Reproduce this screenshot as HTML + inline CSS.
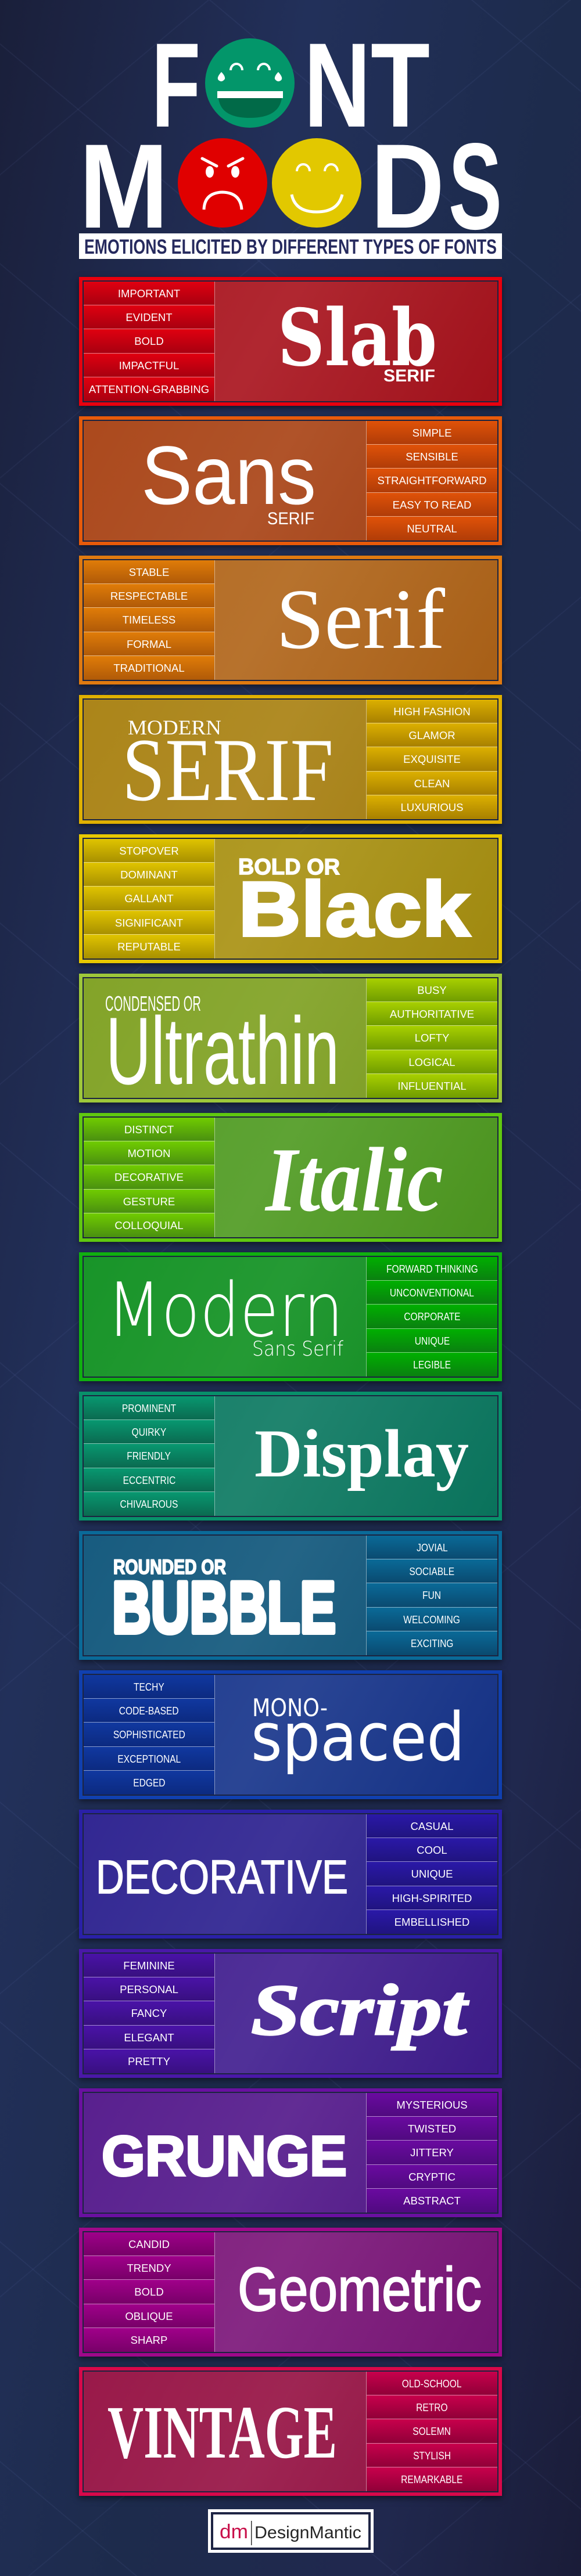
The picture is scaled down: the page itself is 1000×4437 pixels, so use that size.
<!DOCTYPE html>
<html><head><meta charset="utf-8">
<style>
*{margin:0;padding:0;box-sizing:border-box}
body{width:1000px;height:4437px;overflow:hidden;position:relative;
background:
repeating-linear-gradient(40deg,rgba(255,255,255,0) 0 150px,rgba(150,170,255,.06) 150px 152px,rgba(255,255,255,0) 152px 290px),
repeating-linear-gradient(-40deg,rgba(255,255,255,0) 0 210px,rgba(150,170,255,.05) 210px 212px,rgba(255,255,255,0) 212px 400px),
linear-gradient(100deg,#1a1f3a 0%,#22305a 30%,#1d2b4c 55%,#20284e 80%,#1a1c38 100%);
font-family:"Liberation Sans",sans-serif}
.card{position:absolute;left:136px;width:728px;height:222px;background:var(--b);box-shadow:0 4px 10px rgba(0,0,0,.5)}
.in{position:absolute;left:6px;top:6px;right:6px;bottom:6px;border:2px solid #1c2440;
background:linear-gradient(120deg,rgba(255,255,255,.04),rgba(255,255,255,.09) 45%,rgba(0,0,0,.05)),var(--f)}
.list{position:absolute;top:8px;width:226px;height:206px}
.list.l{left:8px;border-right:1px solid rgba(255,255,255,.45)}
.list.r{left:494px;border-left:1px solid rgba(255,255,255,.45)}
.list div{height:41.2px;line-height:41px;text-align:center;color:#fff;font-size:18.5px;
background:linear-gradient(var(--lt),var(--lb));border-bottom:1px solid rgba(255,255,255,.5)}
.list div:last-child{border-bottom:none}
.n div span{display:inline-block;transform:scaleX(.84)}
.card svg{position:absolute;left:0;top:0}
svg text{fill:#fff}
</style></head><body>

<svg width="1000" height="460" style="position:absolute;left:0;top:0">
<g font-family="Liberation Sans" font-weight="bold" font-size="207" fill="#fff">
<text x="261" y="218" textLength="84" lengthAdjust="spacingAndGlyphs">F</text>
<text x="523" y="218" textLength="115" lengthAdjust="spacingAndGlyphs">N</text>
<text x="638" y="218" textLength="102" lengthAdjust="spacingAndGlyphs">T</text>
<text x="136" y="392" textLength="154" lengthAdjust="spacingAndGlyphs">M</text>
<text x="638" y="392" textLength="127" lengthAdjust="spacingAndGlyphs">D</text>
<text x="772" y="394" textLength="92" lengthAdjust="spacingAndGlyphs" font-size="212">S</text>
</g>
<!-- green face -->
<circle cx="430" cy="143" r="77" fill="#03966a"/>
<path d="M397,121 A10,11 0 0 1 417,121 M444,121 A10,11 0 0 1 464,121" stroke="#fff" stroke-width="4" fill="none"/>
<path d="M381,124 Q372,134 376,138 Q382,143 387,136 Q388,131 381,124Z M479,124 Q488,134 484,138 Q478,143 473,136 Q472,131 479,124Z" fill="#fff"/>
<rect x="374" y="157" width="113" height="12" fill="#fff"/>
<path d="M376,169 H485 Q480,203 430,203 Q380,203 376,169Z" fill="#016a48"/>
<!-- red face -->
<circle cx="383" cy="315" r="77" fill="#e00000"/>
<path d="M348,273 L373,286 M418,273 L393,286" stroke="#fff" stroke-width="5" stroke-linecap="round"/>
<ellipse cx="361" cy="296" rx="7" ry="10" fill="#fff"/>
<ellipse cx="405" cy="296" rx="7" ry="10" fill="#fff"/>
<path d="M351,361 Q352,332 383,331 Q414,332 416,361" stroke="#fff" stroke-width="5" fill="none"/>
<!-- yellow face -->
<circle cx="545" cy="315" r="77" fill="#e2c800"/>
<path d="M511,295 A11,12 0 0 1 533,295 M559,295 A11,12 0 0 1 581,295" stroke="#fff" stroke-width="4" fill="none"/>
<path d="M502,335 Q508,365 545,365 Q582,365 589,335" stroke="#fff" stroke-width="5" fill="none"/>
<rect x="136" y="402" width="728" height="44" fill="#fff"/>
<text x="145" y="437" font-size="35" font-weight="bold" style="fill:#262a5e" textLength="710" lengthAdjust="spacingAndGlyphs">EMOTIONS ELICITED BY DIFFERENT TYPES OF FONTS</text>
</svg>

<!-- 1 Slab -->
<div class="card" style="top:477px;--b:#e8000e;--f:#a8121c;--lt:#e00010;--lb:#a80010">
<div class="in"></div>
<div class="list l"><div>IMPORTANT</div><div>EVIDENT</div><div>BOLD</div><div>IMPACTFUL</div><div>ATTENTION-GRABBING</div></div>
<svg width="728" height="222"><text x="342" y="152" font-family="DejaVu Serif" font-weight="bold" font-size="135" textLength="274" lengthAdjust="spacingAndGlyphs">Slab</text>
<text x="524" y="180" font-family="Liberation Sans" font-weight="bold" font-size="30" textLength="89" lengthAdjust="spacingAndGlyphs">SERIF</text></svg></div>

<!-- 2 Sans -->
<div class="card" style="top:717px;--b:#e85a0a;--f:#a84214;--lt:#e05208;--lb:#b03c08">
<div class="in"></div>
<div class="list r"><div>SIMPLE</div><div>SENSIBLE</div><div>STRAIGHTFORWARD</div><div>EASY TO READ</div><div>NEUTRAL</div></div>
<svg width="728" height="222"><text x="107" y="151" font-family="Liberation Sans" font-size="143" textLength="301" lengthAdjust="spacingAndGlyphs">Sans</text>
<text x="324" y="186" font-family="Liberation Sans" font-size="30" textLength="81" lengthAdjust="spacingAndGlyphs">SERIF</text></svg></div>

<!-- 3 Serif -->
<div class="card" style="top:957px;--b:#e07a10;--f:#b06418;--lt:#e07c08;--lb:#b05a08">
<div class="in"></div>
<div class="list l"><div>STABLE</div><div>RESPECTABLE</div><div>TIMELESS</div><div>FORMAL</div><div>TRADITIONAL</div></div>
<svg width="728" height="222"><text x="339" y="159" font-family="Liberation Serif" font-size="148" textLength="291" lengthAdjust="spacingAndGlyphs">Serif</text></svg></div>

<!-- 4 Modern Serif -->
<div class="card" style="top:1197px;--b:#e0b000;--f:#a88010;--lt:#dcb000;--lb:#a88000">
<div class="in"></div>
<div class="list r"><div>HIGH FASHION</div><div>GLAMOR</div><div>EXQUISITE</div><div>CLEAN</div><div>LUXURIOUS</div></div>
<svg width="728" height="222"><text x="84" y="68" font-family="Liberation Serif" font-size="36" textLength="161" lengthAdjust="spacingAndGlyphs">MODERN</text>
<text x="74" y="181" font-family="Liberation Serif" font-size="155" textLength="364" lengthAdjust="spacingAndGlyphs">SERIF</text></svg></div>

<!-- 5 Bold -->
<div class="card" style="top:1437px;--b:#e8c800;--f:#a89010;--lt:#e0c400;--lb:#a89000">
<div class="in"></div>
<div class="list l"><div>STOPOVER</div><div>DOMINANT</div><div>GALLANT</div><div>SIGNIFICANT</div><div>REPUTABLE</div></div>
<svg width="728" height="222"><text x="274" y="69" font-family="Liberation Sans" font-weight="bold" font-size="39" stroke="#fff" stroke-width="1.5" textLength="175" lengthAdjust="spacingAndGlyphs">BOLD OR</text>
<text x="274" y="175" font-family="Liberation Sans" font-weight="bold" font-size="134" stroke="#fff" stroke-width="4" textLength="399" lengthAdjust="spacingAndGlyphs">Black</text></svg></div>

<!-- 6 Ultrathin -->
<div class="card" style="top:1677px;--b:#9ec83a;--f:#7ea020;--lt:#a8d000;--lb:#709c00">
<div class="in"></div>
<div class="list r"><div>BUSY</div><div>AUTHORITATIVE</div><div>LOFTY</div><div>LOGICAL</div><div>INFLUENTIAL</div></div>
<svg width="728" height="222"><text x="45" y="64" font-family="Liberation Sans" font-size="36" textLength="165" lengthAdjust="spacingAndGlyphs">CONDENSED OR</text>
<text x="46" y="190" font-family="Liberation Sans" font-size="165" textLength="402" lengthAdjust="spacingAndGlyphs">Ultrathin</text></svg></div>

<!-- 7 Italic -->
<div class="card" style="top:1917px;--b:#60c810;--f:#4e9a20;--lt:#70cc00;--lb:#4a9010">
<div class="in"></div>
<div class="list l"><div>DISTINCT</div><div>MOTION</div><div>DECORATIVE</div><div>GESTURE</div><div>COLLOQUIAL</div></div>
<svg width="728" height="222"><text x="321" y="168" font-family="Liberation Serif" font-weight="bold" font-style="italic" font-size="158" textLength="306" lengthAdjust="spacingAndGlyphs">Italic</text></svg></div>

<!-- 8 Modern -->
<div class="card" style="top:2157px;--b:#10b010;--f:#0f9020;--lt:#00b000;--lb:#0a8010">
<div class="in"></div>
<div class="list r n"><div><span>FORWARD THINKING</span></div><div><span>UNCONVENTIONAL</span></div><div><span>CORPORATE</span></div><div><span>UNIQUE</span></div><div><span>LEGIBLE</span></div></div>
<svg width="728" height="222"><text x="48" y="144" font-family="DejaVu Sans" font-weight="200" font-size="128" textLength="407" lengthAdjust="spacingAndGlyphs">Modern</text>
<text x="298" y="178" font-family="DejaVu Sans" font-weight="200" font-size="35" textLength="157" lengthAdjust="spacingAndGlyphs">Sans Serif</text></svg></div>

<!-- 9 Display -->
<div class="card" style="top:2397px;--b:#08906a;--f:#0a7860;--lt:#089870;--lb:#0a6a50">
<div class="in"></div>
<div class="list l n"><div><span>PROMINENT</span></div><div><span>QUIRKY</span></div><div><span>FRIENDLY</span></div><div><span>ECCENTRIC</span></div><div><span>CHIVALROUS</span></div></div>
<svg width="728" height="222"><text x="302" y="146" font-family="Liberation Serif" font-weight="bold" font-size="118" textLength="369" lengthAdjust="spacingAndGlyphs">Display</text></svg></div>

<!-- 10 Bubble -->
<div class="card" style="top:2637px;--b:#0a6a98;--f:#0e557a;--lt:#0a6a98;--lb:#0a4a70">
<div class="in"></div>
<div class="list r n"><div><span>JOVIAL</span></div><div><span>SOCIABLE</span></div><div><span>FUN</span></div><div><span>WELCOMING</span></div><div><span>EXCITING</span></div></div>
<svg width="728" height="222"><text x="59" y="74" font-family="Liberation Sans" font-weight="bold" font-size="35" stroke="#fff" stroke-width="2" stroke-linejoin="round" textLength="194" lengthAdjust="spacingAndGlyphs">ROUNDED OR</text>
<text x="57" y="175" font-family="Liberation Sans" font-weight="bold" font-size="125" stroke="#fff" stroke-width="8" stroke-linejoin="round" textLength="385" lengthAdjust="spacingAndGlyphs">BUBBLE</text></svg></div>

<!-- 11 Mono -->
<div class="card" style="top:2877px;--b:#1040b0;--f:#15338a;--lt:#1038a0;--lb:#0c2a80">
<div class="in"></div>
<div class="list l n"><div><span>TECHY</span></div><div><span>CODE-BASED</span></div><div><span>SOPHISTICATED</span></div><div><span>EXCEPTIONAL</span></div><div><span>EDGED</span></div></div>
<svg width="728" height="222"><text x="298" y="79" font-family="DejaVu Sans" font-size="42" textLength="130" lengthAdjust="spacingAndGlyphs">MONO-</text>
<text x="296" y="155" font-family="DejaVu Sans" font-size="115" textLength="368" lengthAdjust="spacingAndGlyphs">spaced</text></svg></div>

<!-- 12 Decorative -->
<div class="card" style="top:3117px;--b:#2a20a8;--f:#2a1f8e;--lt:#2a18a8;--lb:#201480">
<div class="in"></div>
<div class="list r"><div>CASUAL</div><div>COOL</div><div>UNIQUE</div><div>HIGH-SPIRITED</div><div>EMBELLISHED</div></div>
<svg width="728" height="222"><text x="29" y="144" font-family="Liberation Sans" font-size="82" stroke="#fff" stroke-width="1.5" textLength="434" lengthAdjust="spacingAndGlyphs">DECORATIVE</text></svg></div>

<!-- 13 Script -->
<div class="card" style="top:3357px;--b:#4a18a8;--f:#3f1c8e;--lt:#4a12a8;--lb:#381080">
<div class="in"></div>
<div class="list l"><div>FEMININE</div><div>PERSONAL</div><div>FANCY</div><div>ELEGANT</div><div>PRETTY</div></div>
<svg width="728" height="222"><text x="296" y="147" font-family="Liberation Serif" font-weight="bold" font-style="italic" font-size="125" stroke="#fff" stroke-width="3" textLength="371" lengthAdjust="spacingAndGlyphs">Script</text></svg></div>

<!-- 14 Grunge -->
<div class="card" style="top:3597px;--b:#6a10a0;--f:#52178a;--lt:#6a0aa0;--lb:#500a80">
<div class="in"></div>
<div class="list r"><div>MYSTERIOUS</div><div>TWISTED</div><div>JITTERY</div><div>CRYPTIC</div><div>ABSTRACT</div></div>
<svg width="728" height="222"><text x="39" y="150" font-family="Liberation Sans" font-weight="bold" font-size="97" stroke="#fff" stroke-width="4" textLength="422" lengthAdjust="spacingAndGlyphs">GRUNGE</text></svg></div>

<!-- 15 Geometric -->
<div class="card" style="top:3837px;--b:#a0088a;--f:#7a1478;--lt:#a0008a;--lb:#780068">
<div class="in"></div>
<div class="list l"><div>CANDID</div><div>TRENDY</div><div>BOLD</div><div>OBLIQUE</div><div>SHARP</div></div>
<svg width="728" height="222"><text x="273" y="143" font-family="Liberation Sans" font-size="107" stroke="#fff" stroke-width="2" textLength="420" lengthAdjust="spacingAndGlyphs">Geometric</text></svg></div>

<!-- 16 Vintage -->
<div class="card" style="top:4077px;--b:#d8084a;--f:#951042;--lt:#c8004c;--lb:#900038">
<div class="in"></div>
<div class="list r n"><div><span>OLD-SCHOOL</span></div><div><span>RETRO</span></div><div><span>SOLEMN</span></div><div><span>STYLISH</span></div><div><span>REMARKABLE</span></div></div>
<svg width="728" height="222"><text x="49" y="156" font-family="Liberation Serif" font-weight="bold" font-size="130" textLength="395" lengthAdjust="spacingAndGlyphs">VINTAGE</text></svg></div>

<!-- logo -->
<div style="position:absolute;left:358px;top:4322px;width:285px;height:75px;background:#fff">
<div style="position:absolute;left:5px;top:5px;right:5px;bottom:5px;border:4px solid #1e2444"></div>
<svg width="285" height="75" style="position:absolute;left:0;top:0">
<text x="20" y="50" font-family="Liberation Sans" font-size="34" style="fill:#c8104a" textLength="49" lengthAdjust="spacingAndGlyphs">dm</text>
<rect x="74" y="20" width="1.5" height="42" fill="#333"/>
<text x="80" y="50" font-family="Liberation Sans" font-size="30" style="fill:#262626" textLength="184" lengthAdjust="spacingAndGlyphs">DesignMantic</text>
</svg></div>

</body></html>
